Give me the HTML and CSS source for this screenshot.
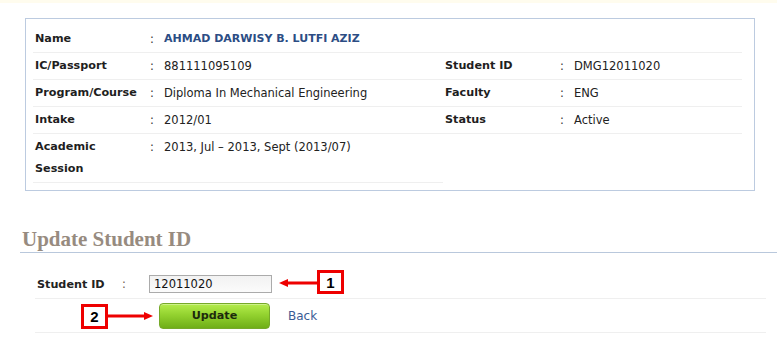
FILE: index.html
```html
<!DOCTYPE html>
<html>
<head>
<meta charset="utf-8">
<link rel="stylesheet" href="styles.css">
</head>
<body>
<div class="topstrip"></div>
<div class="infobox">
  <table class="info info-left">
    <tr><th>Name</th><td class="colon">:</td><td class="name-val">AHMAD DARWISY B. LUTFI AZIZ</td></tr>
    <tr><th>IC/Passport</th><td class="colon">:</td><td>881111095109</td></tr>
    <tr><th>Program/Course</th><td class="colon">:</td><td>Diploma In Mechanical Engineering</td></tr>
    <tr><th>Intake</th><td class="colon">:</td><td>2012/01</td></tr>
    <tr><th>Academic<br>Session</th><td class="colon">:</td><td>2013, Jul – 2013, Sept (2013/07)</td></tr>
  </table>
  <table class="info info-right">
    <tr><th>&nbsp;</th><td class="colon"></td><td></td></tr>
    <tr><th>Student ID</th><td class="colon">:</td><td>DMG12011020</td></tr>
    <tr><th>Faculty</th><td class="colon">:</td><td>ENG</td></tr>
    <tr><th>Status</th><td class="colon">:</td><td>Active</td></tr>
  </table>
</div>

<h2 class="section-title">Update Student ID</h2>

<div class="form">
  <div class="form-row">
    <label class="form-label" for="sid">Student ID</label>
    <span class="form-colon">:</span>
    <input id="sid" class="text-input" type="text" value="12011020">
  </div>
  <div class="form-row form-actions">
    <button class="btn-update" type="button">Update</button>
    <a class="back-link" href="#">Back</a>
  </div>

  <svg class="arrow arrow-1" width="38" height="12" viewBox="0 0 38 12">
    <rect x="7" y="4.5" width="31" height="3" fill="#ee0000"/>
    <polygon points="0,6 9,2 9,10" fill="#ee0000"/>
  </svg>
  <div class="callout callout-1">1</div>

  <div class="callout callout-2">2</div>
  <svg class="arrow arrow-2" width="45" height="12" viewBox="0 0 45 12">
    <rect x="0" y="4.5" width="38" height="3" fill="#ee0000"/>
    <polygon points="45,6 36,2 36,10" fill="#ee0000"/>
  </svg>
</div>
</body>
</html>
```

FILE: styles.css
```css
html, body {
  margin: 0;
  padding: 0;
  background: #ffffff;
}

body {
  font-family: "DejaVu Sans", Verdana, sans-serif;
  font-size: 11.5px;
  color: #222222;
  width: 777px;
  height: 358px;
  overflow: hidden;
}

.topstrip {
  height: 3px;
  background: #fffcee;
}

.infobox {
  margin: 15px 0 0 25px;
  width: 730px;
  height: 173px;
  box-sizing: border-box;
  border: 1px solid #bccbe0;
  padding: 7px 0 0 7px;
  display: flex;
  align-items: flex-start;
}

.info {
  border-collapse: collapse;
  border-spacing: 0;
  table-layout: fixed;
}

.info-left { width: 410px; }
.info-right { width: 299px; }

.info th,
.info td {
  padding: 2px 2px;
  line-height: 22px;
  text-align: left;
  vertical-align: top;
  border-bottom: 1px solid #efefef;
}

.info th {
  font-weight: bold;
  font-size: 11.2px;
  width: 110px;
  color: #1e1e1e;
}

.info .colon {
  width: 10px;
  padding-left: 3px;
  color: #333333;
}

.info .name-val {
  font-weight: bold;
  font-size: 11px;
  color: #2c4d84;
}

.section-title {
  margin: 36px 0 0 20px;
  padding: 0 0 1px 2px;
  border-bottom: 1px solid #b9c8dc;
  font-family: Georgia, "Liberation Serif", "DejaVu Serif", serif;
  font-size: 21px;
  font-weight: bold;
  line-height: 24px;
  color: #978b80;
}

.form {
  position: relative;
  margin: 17px 11px 0 35px;
}

.form-row {
  display: flex;
  align-items: center;
  height: 28px;
  border-bottom: 1px solid #efefef;
  padding-left: 2px;
}

.form-label {
  width: 85px;
  font-weight: bold;
  font-size: 11.2px;
}

.form-colon {
  width: 27px;
  color: #6d5a4e;
}

.text-input {
  width: 123px;
  height: 18px;
  box-sizing: border-box;
  margin: 0;
  padding: 0 4px;
  border: 1px solid #ababab;
  background: linear-gradient(#f2f2f2, #fbfbfb);
  font-family: "DejaVu Sans", Verdana, sans-serif;
  font-size: 11.5px;
  color: #111111;
  outline: none;
}

.form-actions {
  height: 33px;
  padding-left: 124px;
}

.btn-update {
  width: 111px;
  height: 26px;
  margin: 0;
  padding: 0;
  border: 1px solid #76a92a;
  border-radius: 4px;
  background: linear-gradient(#b4ec4c 0%, #93d22f 45%, #6fae17 100%);
  box-shadow: inset 0 1px 0 rgba(255,255,255,0.35);
  font-family: "DejaVu Sans", Verdana, sans-serif;
  font-size: 11.2px;
  font-weight: bold;
  color: #1d2a0c;
}

.back-link {
  margin-left: 18px;
  color: #3a5b94;
  text-decoration: none;
  font-size: 12px;
}

.arrow {
  position: absolute;
  display: block;
}

.arrow-1 { left: 244px; top: 7px; }
.arrow-2 { left: 73px; top: 40px; }

.callout {
  position: absolute;
  box-sizing: border-box;
  border: 3px solid #ee0000;
  background: #ffffff;
  color: #000000;
  font-family: "Liberation Sans", Arial, sans-serif;
  font-weight: bold;
  font-size: 15px;
  display: flex;
  align-items: center;
  justify-content: center;
}

.callout-1 {
  left: 282px;
  top: 0;
  width: 27px;
  height: 24px;
}

.callout-2 {
  left: 46px;
  top: 34px;
  width: 27px;
  height: 25px;
}
```
